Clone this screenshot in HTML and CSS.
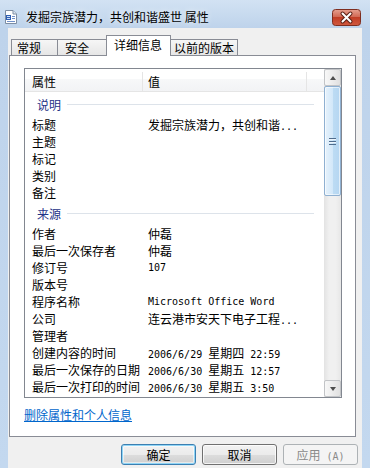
FILE: index.html
```html
<!DOCTYPE html>
<html lang="zh-CN">
<head>
    <meta charset="UTF-8">
    <title>发掘宗族潜力，共创和谐盛世 属性</title>
    <link rel="stylesheet" href="styles.css">
</head>
<body>
    <div class="window">
        <div class="titlebar">
            <svg class="doc-icon" width="12" height="14" viewBox="0 0 12 14">
                <path d="M0.5 0.5 H8 L11.5 4 V13.5 H0.5 Z" fill="#fff" stroke="#7d8da3"/>
                <path d="M8 0.5 V4 H11.5" fill="#dfe7f1" stroke="#7d8da3"/>
                <rect x="1" y="5" width="5" height="5" fill="#2f5fb3"/>
                <rect x="2" y="6" width="3" height="1" fill="#cfe0f7"/>
                <rect x="2" y="8" width="3" height="1" fill="#cfe0f7"/>
                <rect x="7" y="6" width="3" height="1" fill="#6f8fc8"/>
                <rect x="7" y="8" width="3" height="1" fill="#6f8fc8"/>
                <rect x="2" y="11" width="8" height="1" fill="#6f8fc8"/>
            </svg>
            <span class="title">发掘宗族潜力，共创和谐盛世 属性</span>
            <div class="close-btn">
                <svg width="29" height="17" viewBox="0 0 29 17">
                    <defs>
                        <linearGradient id="closeGrad" x1="0" y1="0" x2="0" y2="1">
                            <stop offset="0" stop-color="#e6a090"/>
                            <stop offset="0.45" stop-color="#d26a55"/>
                            <stop offset="0.5" stop-color="#c13d25"/>
                            <stop offset="1" stop-color="#d0593f"/>
                        </linearGradient>
                    </defs>
                    <rect x="0.5" y="0.5" width="28" height="16" rx="3" fill="url(#closeGrad)" stroke="#7e2e20"/>
                    <path d="M10.5 4.5 L18.5 12.5 M18.5 4.5 L10.5 12.5" stroke="#5c2014" stroke-width="4" stroke-linecap="round"/>
                    <path d="M10.5 4.5 L18.5 12.5 M18.5 4.5 L10.5 12.5" stroke="#fff" stroke-width="2" stroke-linecap="round"/>
                </svg>
            </div>
        </div>

        <div class="client">
            <div class="tabs">
                <div class="tab tab-general">常规</div>
                <div class="tab tab-security">安全</div>
                <div class="tab tab-details active">详细信息</div>
                <div class="tab tab-previous">以前的版本</div>
            </div>

            <div class="panel">
                <div class="listview">
                    <div class="list-body">
                        <div class="list-header">
                            <div class="col-name">属性</div>
                            <div class="col-value">值</div>
                            <div class="col-rest"></div>
                        </div>

                        <div class="group"><span>说明</span><i class="group-line"></i></div>
                        <div class="row"><span class="name">标题</span><span class="value">发掘宗族潜力，共创和谐<span class="m">...</span></span></div>
                        <div class="row"><span class="name">主题</span></div>
                        <div class="row"><span class="name">标记</span></div>
                        <div class="row"><span class="name">类别</span></div>
                        <div class="row"><span class="name">备注</span></div>

                        <div class="group"><span>来源</span><i class="group-line"></i></div>
                        <div class="row"><span class="name">作者</span><span class="value">仲磊</span></div>
                        <div class="row"><span class="name">最后一次保存者</span><span class="value">仲磊</span></div>
                        <div class="row"><span class="name">修订号</span><span class="value m">107</span></div>
                        <div class="row"><span class="name">版本号</span></div>
                        <div class="row"><span class="name">程序名称</span><span class="value m">Microsoft Office Word</span></div>
                        <div class="row"><span class="name">公司</span><span class="value">连云港市安天下电子工程<span class="m">...</span></span></div>
                        <div class="row"><span class="name">管理者</span></div>
                        <div class="row"><span class="name">创建内容的时间</span><span class="value"><span class="m">2006/6/29 </span>星期四<span class="m"> 22:59</span></span></div>
                        <div class="row"><span class="name">最后一次保存的日期</span><span class="value"><span class="m">2006/6/30 </span>星期五<span class="m"> 12:57</span></span></div>
                        <div class="row"><span class="name">最后一次打印的时间</span><span class="value"><span class="m">2006/6/30 </span>星期五<span class="m"> 3:50</span></span></div>
                    </div>

                    <div class="scrollbar">
                        <div class="sb-btn"><i class="arrow-up"></i></div>
                        <div class="sb-track">
                            <div class="sb-thumb"><i class="grip"></i></div>
                        </div>
                        <div class="sb-btn"><i class="arrow-down"></i></div>
                    </div>
                </div>

                <div class="link-row">
                    <a href="#" class="remove-link">删除属性和个人信息</a>
                </div>
            </div>

            <div class="buttons">
                <button class="btn btn-default">确定</button>
                <button class="btn">取消</button>
                <button class="btn btn-disabled">应用<span class="m"> (A)</span></button>
            </div>
        </div>
    </div>
</body>
</html>
```

FILE: styles.css
```css
* {
    margin: 0;
    padding: 0;
    box-sizing: border-box;
}

body {
    font-family: "Noto Sans CJK SC", sans-serif;
    font-size: 12px;
    color: #000;
    background: #c2d7ee;
}

.window {
    width: 370px;
    height: 468px;
    display: flex;
    flex-direction: column;
    overflow: hidden;
    background: linear-gradient(180deg, #d2e2f3 0, #bed3eb 28px, #c3d8ef 100%);
}

/* title bar */
.titlebar {
    height: 28px;
    padding-top: 6px;
    display: flex;
    align-items: center;
}

.doc-icon {
    margin-left: 5px;
    flex-shrink: 0;
}

.title {
    margin-left: 9px;
    line-height: 16px;
    text-shadow: 0 0 6px rgba(255, 255, 255, 0.9);
}

.close-btn {
    margin-left: auto;
    margin-right: 9px;
    height: 17px;
    display: flex;
}

/* client area */
.client {
    flex: 1;
    margin: 0 8px;
    padding-top: 7px;
    background: #f0f0f0;
    display: flex;
    flex-direction: column;
}

.tabs {
    height: 21px;
    margin-left: 3px;
    display: flex;
    align-items: flex-end;
    position: relative;
    z-index: 1;
}

.tab {
    height: 16px;
    margin-bottom: 1px;
    padding-left: 5px;
    line-height: 15px;
    white-space: nowrap;
    border: 1px solid #898c95;
    border-bottom: none;
    background: linear-gradient(180deg, #f6f6f6, #e6e6e6);
}

.tab + .tab {
    margin-left: -1px;
}

.tab-general { width: 47px; }
.tab-security { width: 50px; padding-left: 7px; }
.tab-previous { width: 68px; padding-left: 3px; }

.tab.active {
    width: 65px;
    height: 21px;
    margin-bottom: 0;
    padding: 2px 0 0 7px;
    line-height: 14px;
    background: #fff;
}

.panel {
    width: 347px;
    height: 382px;
    margin: -1px 0 0 1px;
    padding: 12px 13px 13px 14px;
    border: 1px solid #898c95;
    background: #fff;
}

/* list view */
.listview {
    width: 318px;
    height: 330px;
    border: 1px solid #828790;
    display: flex;
}

.list-body {
    flex: 1;
    overflow: hidden;
}

.list-header {
    height: 23px;
    display: flex;
    border-bottom: 1px solid #e5e5e5;
    background: linear-gradient(180deg, #fff 0, #fff 45%, #f7f8f9 45%, #f2f3f5 100%);
    line-height: 19px;
    padding-top: 3px;
}

.col-name {
    width: 118px;
    padding-left: 7px;
    border-right: 1px solid #e5e5e5;
}

.col-value {
    width: 164px;
    padding-left: 5px;
    border-right: 1px solid #e5e5e5;
}

.col-rest {
    flex: 1;
}

.group {
    height: 24px;
    padding-left: 12px;
    display: flex;
    align-items: center;
    color: #1e3287;
}

.group-line {
    flex: 1;
    height: 1px;
    margin: 1px 10px 0 6px;
    background: #dde3ea;
}

.row {
    height: 17px;
    line-height: 17px;
    display: flex;
    white-space: nowrap;
}

.name {
    width: 123px;
    padding-left: 7px;
    flex-shrink: 0;
}

.m {
    font-family: "DejaVu Sans Mono", monospace;
    font-size: 10px;
}

/* scroll bar */
.scrollbar {
    width: 17px;
    display: flex;
    flex-direction: column;
    background: linear-gradient(90deg, #e3e3e3, #f0f0f0 30%, #f0f0f0 70%, #e6e6e6);
}

.sb-btn {
    height: 17px;
    border: 1px solid #c2c4c7;
    border-radius: 2px;
    background: linear-gradient(90deg, #f8f8f8, #ececec 50%, #e0e0e0);
    display: flex;
    align-items: center;
    justify-content: center;
}

.arrow-up,
.arrow-down {
    width: 0;
    height: 0;
    border-left: 3px solid transparent;
    border-right: 3px solid transparent;
}

.arrow-up {
    border-bottom: 4px solid #4d4d4d;
}

.arrow-down {
    border-top: 4px solid #4d4d4d;
}

.sb-track {
    flex: 1;
}

.sb-thumb {
    height: 110px;
    border: 1px solid #8fb0d1;
    border-radius: 2px;
    background: linear-gradient(90deg, #e6f2fc, #d3e8f9 50%, #bddcf4 50%, #b5d6f1);
    box-shadow: inset 0 0 0 1px rgba(255, 255, 255, 0.6);
    display: flex;
    align-items: center;
    justify-content: center;
}

.grip {
    width: 7px;
    height: 7px;
    background: repeating-linear-gradient(180deg, #4f6d8e 0, #4f6d8e 1px, #eef6fd 1px, #eef6fd 2px, transparent 2px, transparent 3px);
}

/* link and buttons */
.link-row {
    margin-top: 8px;
    line-height: 17px;
}

.remove-link {
    color: #0066cc;
    text-decoration: underline;
}

.buttons {
    margin-top: 7px;
    padding-right: 4px;
    display: flex;
    justify-content: flex-end;
    gap: 6px;
}

.btn {
    width: 75px;
    height: 21px;
    font: inherit;
    line-height: 19px;
    text-align: center;
    color: #000;
    border: 1px solid #707070;
    border-radius: 3px;
    background: linear-gradient(180deg, #f2f2f2, #ebebeb 50%, #dddddd 50%, #cfcfcf);
    box-shadow: inset 0 0 0 1px rgba(255, 255, 255, 0.75);
}

.btn-default {
    border-color: #3c7fb1;
    box-shadow: inset 0 0 0 1px #8fd5f6, inset 0 0 0 2px rgba(255, 255, 255, 0.5);
}

.btn-disabled {
    color: #8a8a8a;
    border-color: #adb2b5;
    background: #f4f4f4;
    box-shadow: none;
}
```
